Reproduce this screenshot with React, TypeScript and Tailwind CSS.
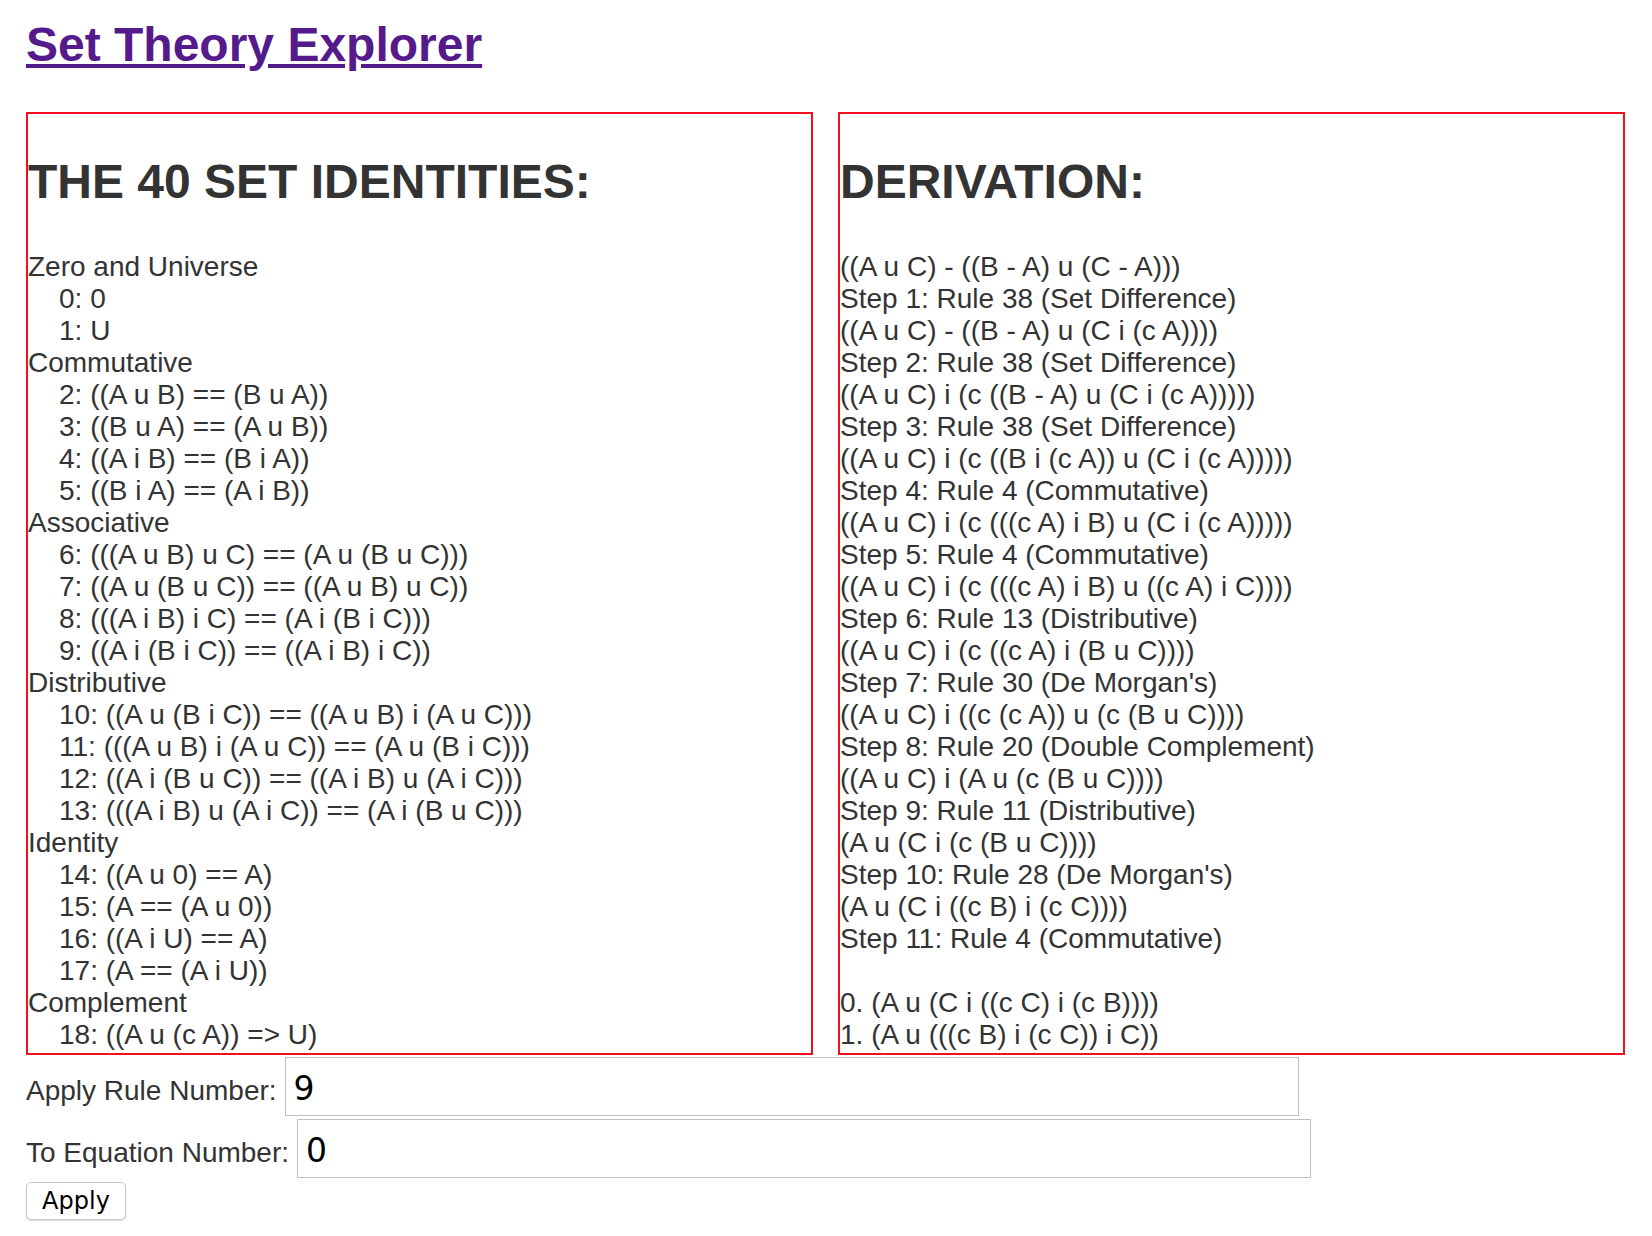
import React from "react"

const identities: { title: string; rules: string[] }[] = [
  { title: "Zero and Universe", rules: ["0: 0", "1: U"] },
  {
    title: "Commutative",
    rules: ["2: ((A u B) == (B u A))", "3: ((B u A) == (A u B))", "4: ((A i B) == (B i A))", "5: ((B i A) == (A i B))"],
  },
  {
    title: "Associative",
    rules: [
      "6: (((A u B) u C) == (A u (B u C)))",
      "7: ((A u (B u C)) == ((A u B) u C))",
      "8: (((A i B) i C) == (A i (B i C)))",
      "9: ((A i (B i C)) == ((A i B) i C))",
    ],
  },
  {
    title: "Distributive",
    rules: [
      "10: ((A u (B i C)) == ((A u B) i (A u C)))",
      "11: (((A u B) i (A u C)) == (A u (B i C)))",
      "12: ((A i (B u C)) == ((A i B) u (A i C)))",
      "13: (((A i B) u (A i C)) == (A i (B u C)))",
    ],
  },
  {
    title: "Identity",
    rules: ["14: ((A u 0) == A)", "15: (A == (A u 0))", "16: ((A i U) == A)", "17: (A == (A i U))"],
  },
  { title: "Complement", rules: ["18: ((A u (c A)) => U)"] },
]

const derivation = [
  "((A u C) - ((B - A) u (C - A)))",
  "Step 1: Rule 38 (Set Difference)",
  "((A u C) - ((B - A) u (C i (c A))))",
  "Step 2: Rule 38 (Set Difference)",
  "((A u C) i (c ((B - A) u (C i (c A)))))",
  "Step 3: Rule 38 (Set Difference)",
  "((A u C) i (c ((B i (c A)) u (C i (c A)))))",
  "Step 4: Rule 4 (Commutative)",
  "((A u C) i (c (((c A) i B) u (C i (c A)))))",
  "Step 5: Rule 4 (Commutative)",
  "((A u C) i (c (((c A) i B) u ((c A) i C))))",
  "Step 6: Rule 13 (Distributive)",
  "((A u C) i (c ((c A) i (B u C))))",
  "Step 7: Rule 30 (De Morgan's)",
  "((A u C) i ((c (c A)) u (c (B u C))))",
  "Step 8: Rule 20 (Double Complement)",
  "((A u C) i (A u (c (B u C))))",
  "Step 9: Rule 11 (Distributive)",
  "(A u (C i (c (B u C))))",
  "Step 10: Rule 28 (De Morgan's)",
  "(A u (C i ((c B) i (c C))))",
  "Step 11: Rule 4 (Commutative)",
  "",
  "0. (A u (C i ((c C) i (c B))))",
  "1. (A u (((c B) i (c C)) i C))",
]

function Panel({ heading, children }: { heading: string; children: React.ReactNode }) {
  return (
    <div className="w-[787px] h-[943px] border-2 border-[#f0101e] overflow-hidden">
      <h2 className="mt-[40px] text-[48px] leading-[55px] font-bold">{heading}</h2>
      <div className="mt-[42px] text-[28px] leading-[32px]">{children}</div>
    </div>
  )
}

export default function App() {
  return (
    <div className="px-[26px] text-[#333333] font-['Liberation_Sans',Arial,sans-serif] bg-white min-h-[1236px]">
      <h1 className="pt-[17px] text-[48px] leading-[55px] font-bold">
        <a href="#" className="text-[#551a8b] underline">
          Set Theory Explorer
        </a>
      </h1>

      <div className="mt-[40px] flex gap-[25px]">
        <Panel heading="THE 40 SET IDENTITIES:">
          {identities.map((group) => (
            <div key={group.title}>
              <div>{group.title}</div>
              {group.rules.map((rule) => (
                <div key={rule} className="pl-[31px]">
                  {rule}
                </div>
              ))}
            </div>
          ))}
        </Panel>
        <Panel heading="DERIVATION:">
          {derivation.map((line, i) => (
            <div key={i} className="h-[32px] whitespace-pre">
              {line}
            </div>
          ))}
        </Panel>
      </div>

      <div className="mt-[2px]">
        <div className="flex items-baseline">
          <label className="text-[28px] leading-[32px]">Apply Rule Number:</label>
          <input
            defaultValue="9"
            className="ml-[8px] w-[1014px] h-[59px] border border-[#c0c0c0] pl-[8px] pt-[4px] text-[33px] text-black font-['DejaVu_Sans',sans-serif] outline-none"
          />
        </div>
        <div className="mt-[3px] flex items-baseline">
          <label className="text-[28px] leading-[32px]">To Equation Number:</label>
          <input
            defaultValue="0"
            className="ml-[8px] w-[1014px] h-[59px] border border-[#c0c0c0] pl-[8px] pt-[4px] text-[33px] text-black font-['DejaVu_Sans',sans-serif] outline-none"
          />
        </div>
        <button className="mt-[4px] w-[100px] h-[38px] rounded-[5px] border border-[#c8c8c8] bg-white shadow-[0_1px_1px_rgba(0,0,0,0.15)] text-[24px] text-black font-['DejaVu_Sans',sans-serif]">
          Apply
        </button>
      </div>
    </div>
  )
}
